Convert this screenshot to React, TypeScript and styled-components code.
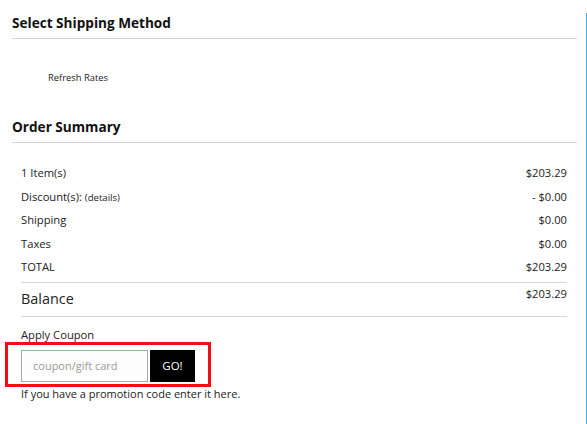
import React from 'react';
import styled, { createGlobalStyle } from 'styled-components';

const GlobalStyle = createGlobalStyle`
  body {
    margin: 0;
    font-family: 'Open Sans', 'Liberation Sans', sans-serif;
    color: #222;
    background: #fff;
  }
`;

const Page = styled.div`
  box-sizing: border-box;
  width: 587px;
  height: 424px;
  border-right: 1px solid #3daee8;
  padding: 0 9px 0 12px;
`;

const SectionTitle = styled.h2<{ $top: number }>`
  margin: ${(p) => p.$top}px 0 0;
  padding-bottom: 5px;
  border-bottom: 1px solid #d5d5d5;
  font-size: 13.6px;
  line-height: 20px;
  font-weight: 700;
  color: #111;
`;

const RefreshLink = styled.div`
  margin: 32px 0 0 36px;
  font-size: 9.4px;
  line-height: 14px;
  color: #222;
`;

const Summary = styled.div`
  margin: 0 10px 0 9px;
`;

const Rows = styled.div`
  margin-top: 18px;
  padding-bottom: 3px;
  border-bottom: 1px solid #d5d5d5;
`;

const Row = styled.div`
  display: flex;
  justify-content: space-between;
  align-items: center;
  height: 23.5px;
  font-size: 11.2px;
`;

const Small = styled.span`
  font-size: 9.6px;
`;

const BalanceRow = styled.div`
  display: flex;
  justify-content: space-between;
  align-items: flex-start;
  box-sizing: border-box;
  height: 34px;
  padding-top: 3px;
  border-bottom: 1px solid #d5d5d5;
`;

const BalanceLabel = styled.span`
  margin-top: 3px;
  font-size: 14.4px;
  line-height: 20px;
`;

const BalanceValue = styled.span`
  font-size: 11.2px;
  line-height: 16px;
`;

const CouponLabel = styled.div`
  margin-top: 11px;
  font-size: 11.2px;
  line-height: 14px;
`;

const Highlight = styled.div`
  display: flex;
  gap: 2px;
  width: max-content;
  margin-left: -16px;
  padding: 5px 13px 2px 13px;
  border: 3px solid #ee1111;
`;

const CouponInput = styled.input`
  box-sizing: border-box;
  width: 127px;
  height: 32px;
  padding: 0 11px;
  border: 1px solid #aaa6a0;
  background: #fdfdfd;
  font-family: inherit;
  font-size: 11px;
  color: #333;
  outline: none;

  &::placeholder {
    color: #9a9a9a;
  }
`;

const GoButton = styled.button`
  width: 45px;
  height: 32px;
  border: 0;
  background: #000;
  color: #fff;
  font-family: inherit;
  font-size: 11.5px;
`;

const Hint = styled.div`
  font-size: 11px;
  line-height: 14px;
`;

const rows = [
  { label: '1 Item(s)', value: '$203.29' },
  { label: 'Discount(s):', extra: '(details)', value: '- $0.00' },
  { label: 'Shipping', value: '$0.00' },
  { label: 'Taxes', value: '$0.00' },
  { label: 'TOTAL', value: '$203.29' },
];

export default function App() {
  return (
    <>
      <GlobalStyle />
      <Page>
        <SectionTitle $top={13}>Select Shipping Method</SectionTitle>
        <RefreshLink>Refresh Rates</RefreshLink>
        <SectionTitle $top={32}>Order Summary</SectionTitle>
        <Summary>
          <Rows>
            {rows.map((r) => (
              <Row key={r.label}>
                <span>
                  {r.label} {r.extra && <Small>{r.extra}</Small>}
                </span>
                <span>{r.value}</span>
              </Row>
            ))}
          </Rows>
          <BalanceRow>
            <BalanceLabel>Balance</BalanceLabel>
            <BalanceValue>$203.29</BalanceValue>
          </BalanceRow>
          <CouponLabel>Apply Coupon</CouponLabel>
          <Highlight>
            <CouponInput placeholder="coupon/gift card" />
            <GoButton>GO!</GoButton>
          </Highlight>
          <Hint>If you have a promotion code enter it here.</Hint>
        </Summary>
      </Page>
    </>
  );
}
